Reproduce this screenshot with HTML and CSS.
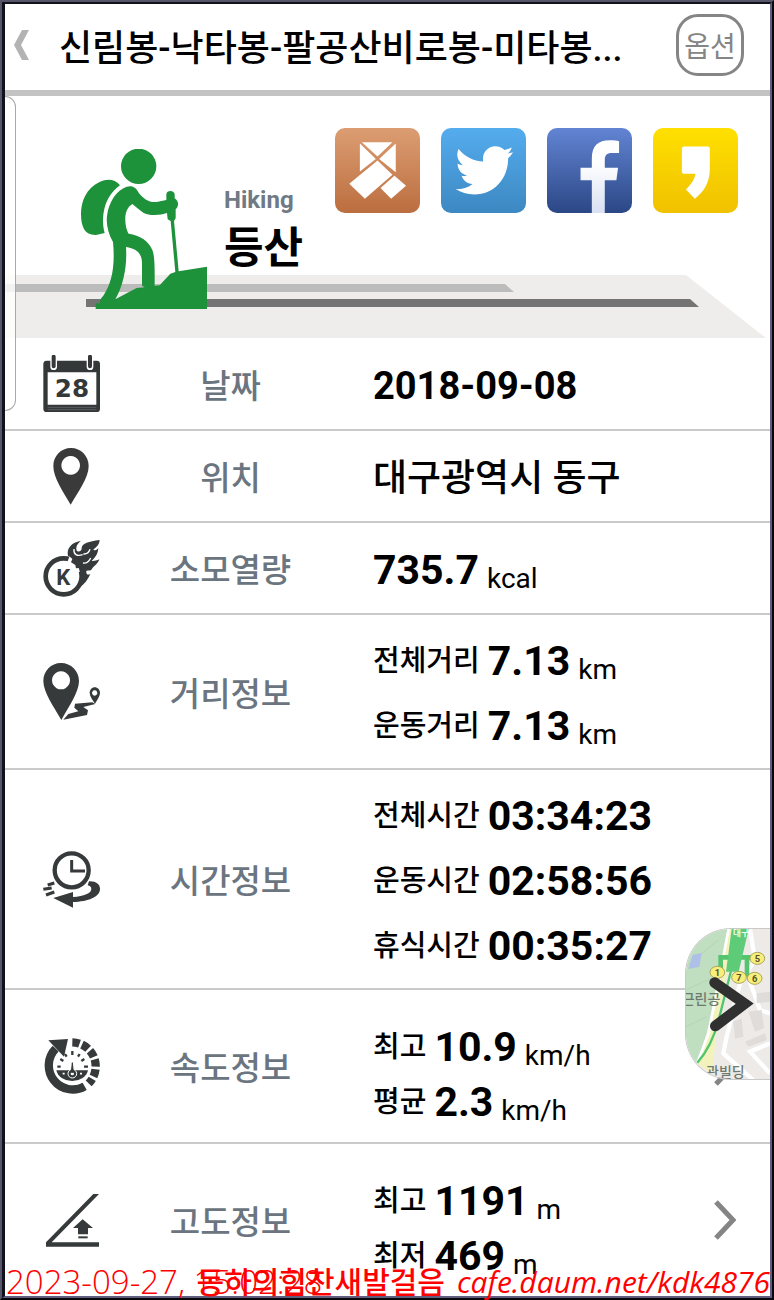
FILE: index.html
```
<!DOCTYPE html>
<html lang="ko">
<head>
    <meta charset="UTF-8">
    <meta name="viewport" content="width=device-width, initial-scale=1.0">
    <title>등산 기록</title>
    <link rel="stylesheet" href="styles.css">
</head>
<body>

<div class="frame">
<div class="screen">

    <header class="topbar">
        <button class="back" aria-label="뒤로">
            <svg viewBox="0 0 15 30"><path d="M8 0h7L7 15l8 15H8L0 15z" fill="#b3b3b3"/></svg>
        </button>
        <h1>신림봉-낙타봉-팔공산비로봉-미타봉...</h1>
        <button class="option">옵션</button>
    </header>

    <section class="hero">
        <svg class="band" viewBox="5 275 765 63" preserveAspectRatio="none">
            <path d="M5 275H686L766 338H5z" fill="#eeedeb"/>
            <path d="M5 284H505L514 292H5z" fill="#bcbcbc"/>
            <path d="M86 299H690L699 307H86z" fill="#747474"/>
        </svg>
        <svg class="hiker" viewBox="243 177 378 480">
            <g fill="#1e913b">
                <circle cx="416" cy="229" r="53"/>
                <path d="M360 286C345 267 322 265 300 275C258 294 243 335 243 372C243 410 254 436 288 435L314 429C302 380 312 320 360 286z"/>
                <path d="M287 640H300C300 630 300 628 310 617C335 580 346 530 339 456C324 430 318 402 321 378C326 335 350 300 380 290C397 285 408 292 416 308C430 325 445 338 470 336L499 330V313C500 300 522 300 524 313V325C538 334 536 350 527 358V385L522 393L536 544L621 530V657H287zM526 546L512 393L503 388L501 369C480 377 445 377 430 368C418 360 406 350 397 342C382 351 375 368 376 392C377 410 380 420 386 431C420 437 445 450 458 482C465 505 464 540 464 587L479 586L511 551zM426 587V520C426 490 410 476 378 471C382 530 370 585 346 628L410 594L434 592z"/>
            </g>
        </svg>
        <div class="sport">
            <p class="sport-en">Hiking</p>
            <p class="sport-ko">등산</p>
        </div>
        <nav class="share">
            <a href="#" aria-label="카카오스토리">
                <svg viewBox="43 54 256 256">
                    <defs><linearGradient id="g1" x2="0" y2="1"><stop stop-color="#dc9d72"/><stop offset="1" stop-color="#bb6e3f"/></linearGradient></defs>
                    <rect x="43" y="54" width="256" height="256" rx="30" fill="url(#g1)"/>
                    <g fill="#fff">
                        <path d="M124 97H216L171 140z"/>
                        <path d="M118 101L166 147L118 185z"/>
                        <path d="M226 101V187L176 147z"/>
                        <path d="M171 152L216 195L133 267L86 222z"/>
                        <path d="M222 198L257 228L212 267L180 235z"/>
                    </g>
                </svg>
            </a>
            <a href="#" aria-label="트위터">
                <svg viewBox="362 54 256 256">
                    <defs><linearGradient id="g2" x2="0" y2="1"><stop stop-color="#55acee"/><stop offset="1" stop-color="#3c88c2"/></linearGradient></defs>
                    <rect x="362" y="54" width="256" height="256" rx="30" fill="url(#g2)"/>
                    <path d="M415 117C434 141 460 153 489 155C485 128 502 110 525 109C537 109 546 114 553 120C560 119 568 116 575 113C573 121 568 127 563 131L579 127C575 134 570 140 564 145C565 205 523 254 462 254C441 254 422 248 406 238C425 240 443 234 457 223C440 222 429 212 424 198C430 199 435 199 440 197C423 193 412 179 412 161C417 164 423 166 428 166C411 153 407 134 415 117z" fill="#fff"/>
                </svg>
            </a>
            <a href="#" aria-label="페이스북">
                <svg viewBox="681 54 256 256">
                    <defs>
                        <linearGradient id="g3" x2="0" y2="1"><stop stop-color="#6284d3"/><stop offset="1" stop-color="#2b4785"/></linearGradient>
                        <linearGradient id="g4" x2="0" y2="1"><stop offset=".3" stop-color="#fff"/><stop offset="1" stop-color="#d8e0f2"/></linearGradient>
                    </defs>
                    <rect x="681" y="54" width="256" height="256" rx="30" fill="url(#g3)"/>
                    <path d="M816 310V211H782V174H816V145C816 108 835 91 870 91C882 91 891 92 898 94V129H876C861 129 855 136 855 150V174H895L890 211H855V310z" fill="url(#g4)"/>
                </svg>
            </a>
            <a href="#" aria-label="카카오">
                <svg viewBox="999 54 256 256">
                    <defs><linearGradient id="g5" x2="0" y2="1"><stop stop-color="#ffe000"/><stop offset="1" stop-color="#f0c100"/></linearGradient></defs>
                    <rect x="999" y="54" width="256" height="256" rx="30" fill="url(#g5)"/>
                    <path d="M1092 110H1164Q1170 110 1170 116V178C1170 218 1152 246 1125 267L1098 239C1112 226 1123 212 1127 192H1092Q1086 192 1086 186V116Q1086 110 1092 110z" fill="#fff"/>
                </svg>
            </a>
        </nav>
    </section>

    <table class="record">
        <colgroup><col class="c-icon"><col class="c-label"><col><col class="c-more"></colgroup>
        <tbody>
            <tr>
                <td class="icon">
                    <svg viewBox="129 45 171 171">
                        <rect x="130" y="62" width="170" height="154" rx="10" fill="#353838"/>
                        <path d="M143 97H289V194H143z" fill="#fff"/>
                        <path d="M143 202H289M143 209H289" stroke="#6b6f6f" stroke-width="2"/>
                        <path d="M161 52V80M270 52V80" stroke="#fff" stroke-width="20" stroke-linecap="round"/>
                        <path d="M161 50V79M270 50V79" stroke="#353838" stroke-width="12" stroke-linecap="round"/>
                        <text x="216" y="172" class="cal-day">28</text>
                    </svg>
                </td>
                <th scope="row">날짜</th>
                <td colspan="2"><p class="line date">2018-09-08</p></td>
            </tr>
            <tr>
                <td class="icon">
                    <svg viewBox="129 321 171 171"><path fill-rule="evenodd" d="M213 321C243 321 266 345 266 375C266 410 236 450 212 491C188 450 160 410 160 375C160 345 183 321 213 321zM212 345a28 28 0 1 0 .1 0z" fill="#3a3a3a"/></svg>
                </td>
                <th scope="row">위치</th>
                <td colspan="2"><p class="line place">대구광역시 동구</p></td>
            </tr>
            <tr>
                <td class="icon">
                    <svg viewBox="129 598 171 171">
                        <circle cx="191" cy="707" r="54" fill="none" stroke="#363a3a" stroke-width="14"/>
                        <path d="M205 656C220 662 232 676 238 694" fill="none" stroke="#fff" stroke-width="22"/>
                        <path d="M204 646C199 622 214 606 243 600C231 611 226 619 231 632C240 634 246 629 245 621C248 607 265 603 299 598C298 614 287 620 280 627C287 632 292 626 295 622C294 644 281 654 275 661C283 662 290 659 298 656C293 672 281 675 273 689L259 690C258 702 263 704 271 700C259 725 249 734 236 742C244 721 243 700 236 682L228 683L226 673L213 665L217 655C212 650 208 647 204 646z" fill="#363a3a"/>
                        <path d="M222 625C220 641 231 648 248 642M250 640C260 641 267 635 270 626M249 667C259 669 267 662 272 652" fill="none" stroke="#fff" stroke-width="4"/>
                        <text x="190" y="732" class="kcal-k">K</text>
                    </svg>
                </td>
                <th scope="row">소모열량</th>
                <td colspan="2"><p class="line"><b>735.7</b><span class="unit">kcal</span></p></td>
            </tr>
            <tr>
                <td class="icon">
                    <svg viewBox="129 66 171 171">
                        <g fill="#363a3a">
                            <path fill-rule="evenodd" d="M183 66C213 66 237 90 237 120C237 153 207 195 184 237C160 195 130 153 130 120C130 90 153 66 183 66zM183 91a27 27 0 1 0 .1 0z"/>
                            <path fill-rule="evenodd" d="M284 139C293 139 300 146 300 156C300 166 291 177 285 188C278 177 269 166 269 156C269 146 276 139 284 139zM284 148a8 8 0 1 0 .1 0z"/>
                            <path d="M225 188L277 184L286 189L250 198L264 208L261 222L190 236L205 219L235 211L223 200z"/>
                        </g>
                    </svg>
                </td>
                <th scope="row">거리정보</th>
                <td colspan="2">
                    <p class="line"><span class="name">전체거리</span><b>7.13</b><span class="unit">km</span></p>
                    <p class="line"><span class="name">운동거리</span><b>7.13</b><span class="unit">km</span></p>
                </td>
            </tr>
            <tr>
                <td class="icon">
                    <svg viewBox="129 630 171 171">
                        <g fill="none" stroke="#363a3a">
                            <circle cx="215" cy="688" r="51" stroke-width="13"/>
                            <path d="M215 657V690H255" stroke-width="9"/>
                            <path d="M163 726L143 732M155 741L130 745M163 753L138 762" stroke-width="9"/>
                        </g>
                        <path d="M267 721C288 720 300 730 300 744C300 768 264 782 219 783V800L160 771L219 753V768C252 766 274 757 274 744C274 738 270 735 263 733z" fill="#363a3a"/>
                    </svg>
                </td>
                <th scope="row">시간정보</th>
                <td colspan="2">
                    <p class="line"><span class="name">전체시간</span><b>03:34:23</b></p>
                    <p class="line"><span class="name">운동시간</span><b>02:58:56</b></p>
                    <p class="line"><span class="name">휴식시간</span><b>00:35:27</b></p>
                </td>
            </tr>
            <tr class="tight">
                <td class="icon">
                    <svg viewBox="129 83 171 171">
                        <path d="M254 228A72 72 0 0 1 167 115" fill="none" stroke="#363a3a" stroke-width="25"/>
                        <path d="M145 90L204 86L192 139z" fill="#363a3a"/>
                        <path d="M217 96A72 72 0 0 1 266 219" fill="none" stroke="#363a3a" stroke-width="25" stroke-dasharray="22 8"/>
                        <path d="M169 180H264A48 37 0 0 1 169 180z" fill="#363a3a"/>
                        <path d="M172 169H182M252 169H264M181 146L190 152M253 146L244 152M195 131L200 139M239 131L234 139M217 122V134" stroke="#363a3a" stroke-width="7"/>
                        <circle cx="217" cy="190" r="13" fill="#363a3a" stroke="#fff" stroke-width="3"/>
                        <circle cx="217" cy="190" r="5" fill="#fff"/>
                        <path d="M214 186L217 157L220 186z" fill="#363a3a" stroke="#363a3a" stroke-width="3"/>
                        <path d="M188 190H194M240 190H246" stroke="#fff" stroke-width="5"/>
                    </svg>
                </td>
                <th scope="row">속도정보</th>
                <td>
                    <p class="line"><span class="name">최고</span><b>10.9</b><span class="unit">km/h</span></p>
                    <p class="line"><span class="name">평균</span><b>2.3</b><span class="unit">km/h</span></p>
                </td>
                <td class="more"><svg viewBox="0 0 23 40"><path d="M3 2L20 20L3 38" fill="none" stroke="#858585" stroke-width="5"/></svg></td>
            </tr>
            <tr class="tight">
                <td class="icon">
                    <svg viewBox="129 550 171 171">
                        <path d="M138 701L280 556H297L155 701H297V714H138z" fill="#363a3a"/>
                        <path d="M248 632L279 658H264V677H234V658H219z" fill="#363a3a"/>
                        <path d="M235 686H263" stroke="#363a3a" stroke-width="6"/>
                    </svg>
                </td>
                <th scope="row">고도정보</th>
                <td>
                    <p class="line"><span class="name">최고</span><b>1191</b><span class="unit">m</span></p>
                    <p class="line"><span class="name">최저</span><b>469</b><span class="unit">m</span></p>
                </td>
                <td class="more"><svg viewBox="0 0 23 40"><path d="M3 2L20 20L3 38" fill="none" stroke="#858585" stroke-width="5"/></svg></td>
            </tr>
        </tbody>
    </table>

    <div class="edge-tab"></div>

    <button class="map" aria-label="지도 열기">
        <svg viewBox="138 87 252 453">
            <path d="M138 87H390V540H138z" fill="#edeae8"/>
            <path d="M138 87H268L200 400L170 490L138 520z" fill="#c0dec0"/>
            <path d="M138 200L235 120M138 380L200 350M138 270L225 230" stroke="#b3d5b4" stroke-width="3"/>
            <path d="M158 165L185 158L178 200L145 207z" fill="#aebfe8"/>
            <path d="M262 87H285L232 380L215 520L170 490L205 400z" fill="#f4f2bc"/>
            <path d="M266 87L206 400L172 488" fill="none" stroke="#fff" stroke-width="8"/>
            <path d="M276 200L236 360Q215 440 172 488" fill="none" stroke="#4fc56f" stroke-width="7"/>
            <path d="M330 87L345 180L300 250L260 410L250 460L340 540M390 430L330 455L390 520M330 245L360 330L390 340" fill="none" stroke="#fff" stroke-width="13"/>
            <path d="M280 365L305 355L310 410L285 416zM325 335L365 330L372 385L345 395zM350 280L390 275V305L350 310zM315 425L375 400L380 420L325 440z" fill="#e0dcd9"/>
            <path d="M242 210V172H350M321 172V230" fill="none" stroke="#55c46e" stroke-width="14"/>
            <path d="M275 87H326L296 215H258z" fill="#5dcb78"/>
            <g class="map-stop">
                <g fill="#f7ef79" stroke="#aba45c" stroke-width="3"><ellipse cx="232" cy="217" rx="22" ry="18"/><ellipse cx="352" cy="175" rx="22" ry="18"/><ellipse cx="297" cy="232" rx="22" ry="18"/><ellipse cx="344" cy="235" rx="22" ry="18"/></g>
                <text x="232" y="228">1</text><text x="352" y="186">5</text><text x="297" y="243">7</text><text x="344" y="246">6</text>
            </g>
            <text x="303" y="108" class="map-station">대구</text>
            <text x="125" y="311" class="map-text">근린공</text>
            <text x="198" y="530" class="map-text">관빌딩</text>
            <path d="M224 248L314 311L226 378" fill="none" stroke="#303030" stroke-width="32" stroke-linecap="round" stroke-linejoin="miter"/>
        </svg>
    </button>

    <footer class="stamp">
        <time class="stamp-time">2023-09-27, 15:02:28</time>
        <span class="stamp-cafe">동하의힘찬새발걸음<i>cafe.daum.net/kdk4876</i></span>
    </footer>

</div>
</div>

</body>
</html>
```
FILE: styles.css
```
* { box-sizing: border-box; }
body { margin: 0; background: #fff; color: #000; font-family: Roboto, "Noto Sans CJK KR", sans-serif; }
h1, p { margin: 0; }
svg { display: block; }
button { padding: 0; border: none; background: none; font-family: inherit; cursor: pointer; }

/* dark bevel round the screen */
.frame { min-height: 100vh; display: flex; border: 2px solid; border-color: #56556a #08080c #08080c #56556a; }
.screen { position: relative; flex: 1; min-width: 0; border: 2px solid; border-width: 2px 2px 2px 3px; border-color: #12121c #5f5e80 #5f5e80 #12121c; }

.topbar { display: flex; align-items: center; height: 92px; padding: 0 26px 4px 9px; border-bottom: 6px solid #c3c3c3; }
.back svg { width: 15px; height: 30px; }
.topbar h1 { flex: 1; min-width: 0; margin-left: 30px; padding-top: 8px; font-size: 36px; line-height: 48px; font-weight: 500; white-space: nowrap; overflow: hidden; }
.option { width: 68px; height: 62px; border: 3px solid #858585; border-radius: 22px; color: #858585; font-size: 28px; font-weight: 400; }

.hero { position: relative; display: flex; align-items: flex-start; height: 242px; padding: 32px 32px 0 76px; }
.band { position: absolute; left: 0; bottom: 0; width: 100%; height: 63px; }
.hiker { position: relative; width: 126px; height: 160px; margin-top: 21px; }
.sport { position: relative; margin: 56px 0 0 17px; }
.sport-en { color: #6f7a85; font-size: 24px; line-height: 32px; font-weight: 700; }
.sport-ko { font-size: 43px; line-height: 64px; font-weight: 700; }
.share { display: flex; gap: 21px; margin-left: auto; }
.share svg { width: 85px; height: 85px; }

.record { width: 100%; border-collapse: collapse; table-layout: fixed; }
.c-icon { width: 133px; }
.c-label { width: 185px; }
.c-more { width: 80px; }
.record tr { height: 92px; border-bottom: 2px solid #cacaca; }
.record tr:last-child { border-bottom: none; }
.record td { padding: 14px 0 9px 50px; vertical-align: middle; }
.record th { padding: 0; color: #6b7580; font-size: 33px; font-weight: 500; text-align: center; }
.record td.icon { padding: 0 0 0 38px; }
.icon svg { width: 57px; height: 57px; }
.line { font-size: 41px; line-height: 65px; white-space: nowrap; }
.line b { font-weight: 700; }
.line.date { font-size: 38px; font-weight: 700; }
.line.place { font-size: 37px; font-weight: 500; }
.name, .unit { line-height: 1; }
.name { margin-right: 8px; font-size: 29px; font-weight: 500; vertical-align: 4px; }
.unit { margin-left: 8px; font-size: 28px; vertical-align: -4px; }
.tight .line { line-height: 55px; }
.record .tight td { padding-top: 30px; padding-bottom: 12px; }
.record .tight td.icon, .record .tight td.more { padding-top: 0; padding-bottom: 0; }
.record td.more { padding-left: 23px; }
.more svg { width: 23px; height: 40px; }

.cal-day { font: 700 74px "DejaVu Sans", sans-serif; fill: #353838; text-anchor: middle; }
.kcal-k { font: 700 66px Roboto, sans-serif; fill: #363a3a; text-anchor: middle; }

/* side panel handle */
.edge-tab { position: absolute; left: 0; top: 92px; width: 11px; height: 315px; border: 1px solid #a9a9a9; border-left: none; border-radius: 0 12px 12px 0; background: rgba(255, 255, 255, .8); }

.map { position: absolute; right: 0; top: 924px; width: 85px; height: 152px; overflow: hidden; border: 1px solid #c9c9c9; border-right: none; border-radius: 46px 0 0 46px; }
.map svg { width: 84px; height: 151px; }
.map-stop text { font: 700 28px Roboto, sans-serif; fill: #55522f; text-anchor: middle; }
.map-station { font: 700 26px "Noto Sans CJK KR", sans-serif; fill: #e9fbe9; text-anchor: middle; }
.map-text { font: 500 42px "Noto Sans CJK KR", sans-serif; fill: #6e7a70; }

.stamp { position: absolute; left: 1px; right: 0; bottom: -3px; height: 34px; color: #f00; line-height: 34px; white-space: nowrap; }
.stamp-time { position: absolute; left: 0; font-family: "Open Sans", sans-serif; font-size: 33px; font-weight: 300; }
.stamp-cafe { position: absolute; right: 0; font-family: "Open Sans", "Noto Sans CJK KR", sans-serif; font-size: 30px; font-weight: 500; }
.stamp-cafe i { margin-left: 12px; }
```
